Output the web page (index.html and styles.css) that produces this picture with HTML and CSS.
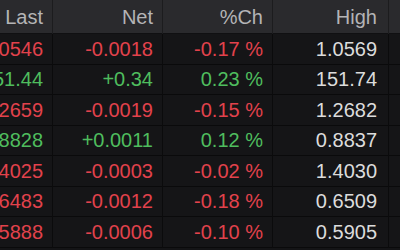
FILE: index.html
```html
<!DOCTYPE html>
<html>
<head>
<meta charset="utf-8">
<link rel="stylesheet" href="styles.css">
</head>
<body>
<div class="grid">
  <div class="row head">
    <div class="c">Last</div><div class="c">Net</div><div class="c">%Ch</div><div class="c hi">High</div><div class="c"></div>
  </div>
  <div class="row">
    <div class="c dn">1.0546</div><div class="c dn">-0.0018</div><div class="c dn">-0.17 %</div><div class="c hi">1.0569</div><div class="c"></div>
  </div>
  <div class="row">
    <div class="c up">151.44</div><div class="c up">+0.34</div><div class="c up">0.23 %</div><div class="c hi">151.74</div><div class="c"></div>
  </div>
  <div class="row">
    <div class="c dn">1.2659</div><div class="c dn">-0.0019</div><div class="c dn">-0.15 %</div><div class="c hi">1.2682</div><div class="c"></div>
  </div>
  <div class="row">
    <div class="c up">0.8828</div><div class="c up">+0.0011</div><div class="c up">0.12 %</div><div class="c hi">0.8837</div><div class="c"></div>
  </div>
  <div class="row">
    <div class="c dn">1.4025</div><div class="c dn">-0.0003</div><div class="c dn">-0.02 %</div><div class="c hi">1.4030</div><div class="c"></div>
  </div>
  <div class="row">
    <div class="c dn">0.6483</div><div class="c dn">-0.0012</div><div class="c dn">-0.18 %</div><div class="c hi">0.6509</div><div class="c"></div>
  </div>
  <div class="row">
    <div class="c dn">0.5888</div><div class="c dn">-0.0006</div><div class="c dn">-0.10 %</div><div class="c hi">0.5905</div><div class="c"></div>
  </div>
</div>
</body>
</html>
```
FILE: styles.css
```css
html, body {
  margin: 0;
  padding: 0;
  background: #141416;
  overflow: hidden;
  width: 400px;
  height: 250px;
}
.grid {
  margin-left: -57px;
  width: 520px;
  font-family: "Liberation Sans", Arial, sans-serif;
  font-size: 20px;
  color: #dcdcdc;
}
.row {
  display: grid;
  grid-template-columns: 110px 110px 110px 116px 74px;
  height: 30.5px;
  background: #151517;
  box-shadow: inset 0 -1px 0 #0a0a0b;
}
.row.head {
  height: 34px;
  background: #2a2a2d;
  color: #b4b4b6;
  box-shadow: inset 0 -1px 0 #101012;
}
.c {
  display: flex;
  align-items: center;
  justify-content: flex-end;
  padding-right: 9px;
  border-right: 1px solid #0b0b0c;
  white-space: nowrap;
  overflow: hidden;
}
.head .c {
  border-right-color: #1c1c1e;
}
.c.hi {
  padding-right: 11px;
}
.dn { color: #e2424c; }
.up { color: #4fbd5e; }
```
